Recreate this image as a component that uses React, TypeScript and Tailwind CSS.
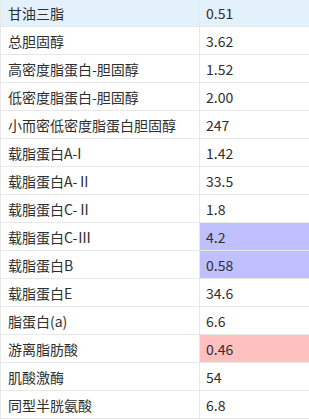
import React from "react";

const rows: { name: string; value: string; bg?: string }[] = [
  { name: "甘油三脂", value: "0.51", bg: "blue" },
  { name: "总胆固醇", value: "3.62" },
  { name: "高密度脂蛋白-胆固醇", value: "1.52" },
  { name: "低密度脂蛋白-胆固醇", value: "2.00" },
  { name: "小而密低密度脂蛋白胆固醇", value: "247" },
  { name: "载脂蛋白A-I", value: "1.42" },
  { name: "载脂蛋白A-Ⅱ", value: "33.5" },
  { name: "载脂蛋白C-Ⅱ", value: "1.8" },
  { name: "载脂蛋白C-Ⅲ", value: "4.2", bg: "purple" },
  { name: "载脂蛋白B", value: "0.58", bg: "purple" },
  { name: "载脂蛋白E", value: "34.6" },
  { name: "脂蛋白(a)", value: "6.6" },
  { name: "游离脂肪酸", value: "0.46", bg: "pink" },
  { name: "肌酸激酶", value: "54" },
  { name: "同型半胱氨酸", value: "6.8" },
];

export default function App() {
  return (
    <div
      className="w-[309px] h-[420px] overflow-hidden bg-white text-[14px] text-[#2e2e2e]"
      style={{ fontFamily: '"Noto Sans CJK SC", "Noto Sans", sans-serif' }}
    >
      <div className="-mt-px border-l border-[#e8e8e8]">
        {rows.map((r, i) => {
          const rowBg = r.bg === "blue" ? "bg-[#e3f1fd]" : "bg-white";
          const valBg =
            r.bg === "purple"
              ? "bg-[#c0c0ff]"
              : r.bg === "pink"
              ? "bg-[#ffc0c0]"
              : "";
          return (
            <div
              key={i}
              className={`flex h-[28px] border-b border-[#e8e8e8] ${rowBg}`}
            >
              <div className="w-[199px] shrink-0 border-r border-[#e8e8e8] pl-[7px] flex items-center pt-[2px] whitespace-nowrap">
                {r.name}
              </div>
              <div className={`flex-1 pl-[6px] flex items-center pt-[2px] ${valBg}`}>
                {r.value}
              </div>
            </div>
          );
        })}
      </div>
    </div>
  );
}
